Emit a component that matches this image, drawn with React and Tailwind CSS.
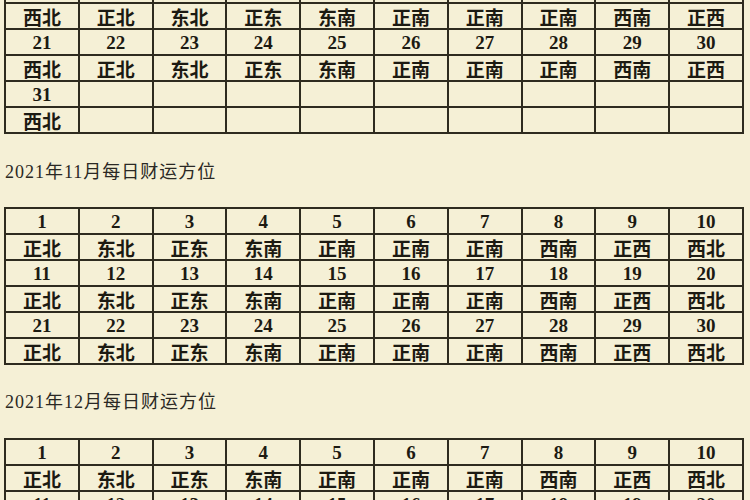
const dirsOct = ["西北", "正北", "东北", "正东", "东南", "正南", "正南", "正南", "西南", "正西"];
const dirsNov = ["正北", "东北", "正东", "东南", "正南", "正南", "正南", "西南", "正西", "西北"];

const range = (from, to) => Array.from({ length: to - from + 1 }, (_, i) => from + i);

const NumRow = ({ nums }) => (
  <tr>
    {range(0, 9).map((i) => (
      <td
        key={i}
        className="h-[26px] border-2 border-[#2e2b1f] p-0 text-center align-middle font-['Liberation_Serif',serif] text-[19px] font-bold leading-none text-[#1c1a12]"
      >
        {nums[i] ?? ""}
      </td>
    ))}
  </tr>
);

const DirRow = ({ dirs }) => (
  <tr>
    {range(0, 9).map((i) => (
      <td
        key={i}
        className="h-[26px] border-2 border-[#2e2b1f] p-0 text-center align-middle font-['Noto_Sans_CJK_SC',sans-serif] text-[19px] font-bold leading-none text-[#1c1a12]"
      >
        {dirs[i] ?? ""}
      </td>
    ))}
  </tr>
);

const Table = ({ children, className = "" }) => (
  <table className={`w-[740px] table-fixed border-collapse ${className}`}>
    <tbody>{children}</tbody>
  </table>
);

const Title = ({ children }) => (
  <p className="h-[24px] pl-[1px] font-['Liberation_Serif','Noto_Sans_CJK_SC',serif] text-[18px] leading-[24px] tracking-[1px] text-[#2a2824]">
    {children}
  </p>
);

export default function App() {
  return (
    <div className="h-[500px] w-[750px] overflow-hidden bg-[#f5f0d6] pl-1">
      <Table className="-mt-[24px]">
        <NumRow nums={range(11, 20)} />
        <DirRow dirs={dirsOct} />
        <NumRow nums={range(21, 30)} />
        <DirRow dirs={dirsOct} />
        <NumRow nums={[31]} />
        <DirRow dirs={["西北"]} />
      </Table>

      <div className="mt-[26px]">
        <Title>2021年11月每日财运方位</Title>
      </div>

      <Table className="mt-[23px]">
        <NumRow nums={range(1, 10)} />
        <DirRow dirs={dirsNov} />
        <NumRow nums={range(11, 20)} />
        <DirRow dirs={dirsNov} />
        <NumRow nums={range(21, 30)} />
        <DirRow dirs={dirsNov} />
      </Table>

      <div className="mt-[25px]">
        <Title>2021年12月每日财运方位</Title>
      </div>

      <Table className="mt-[24px]">
        <NumRow nums={range(1, 10)} />
        <DirRow dirs={dirsNov} />
        <NumRow nums={range(11, 20)} />
        <DirRow dirs={dirsNov} />
      </Table>
    </div>
  );
}
